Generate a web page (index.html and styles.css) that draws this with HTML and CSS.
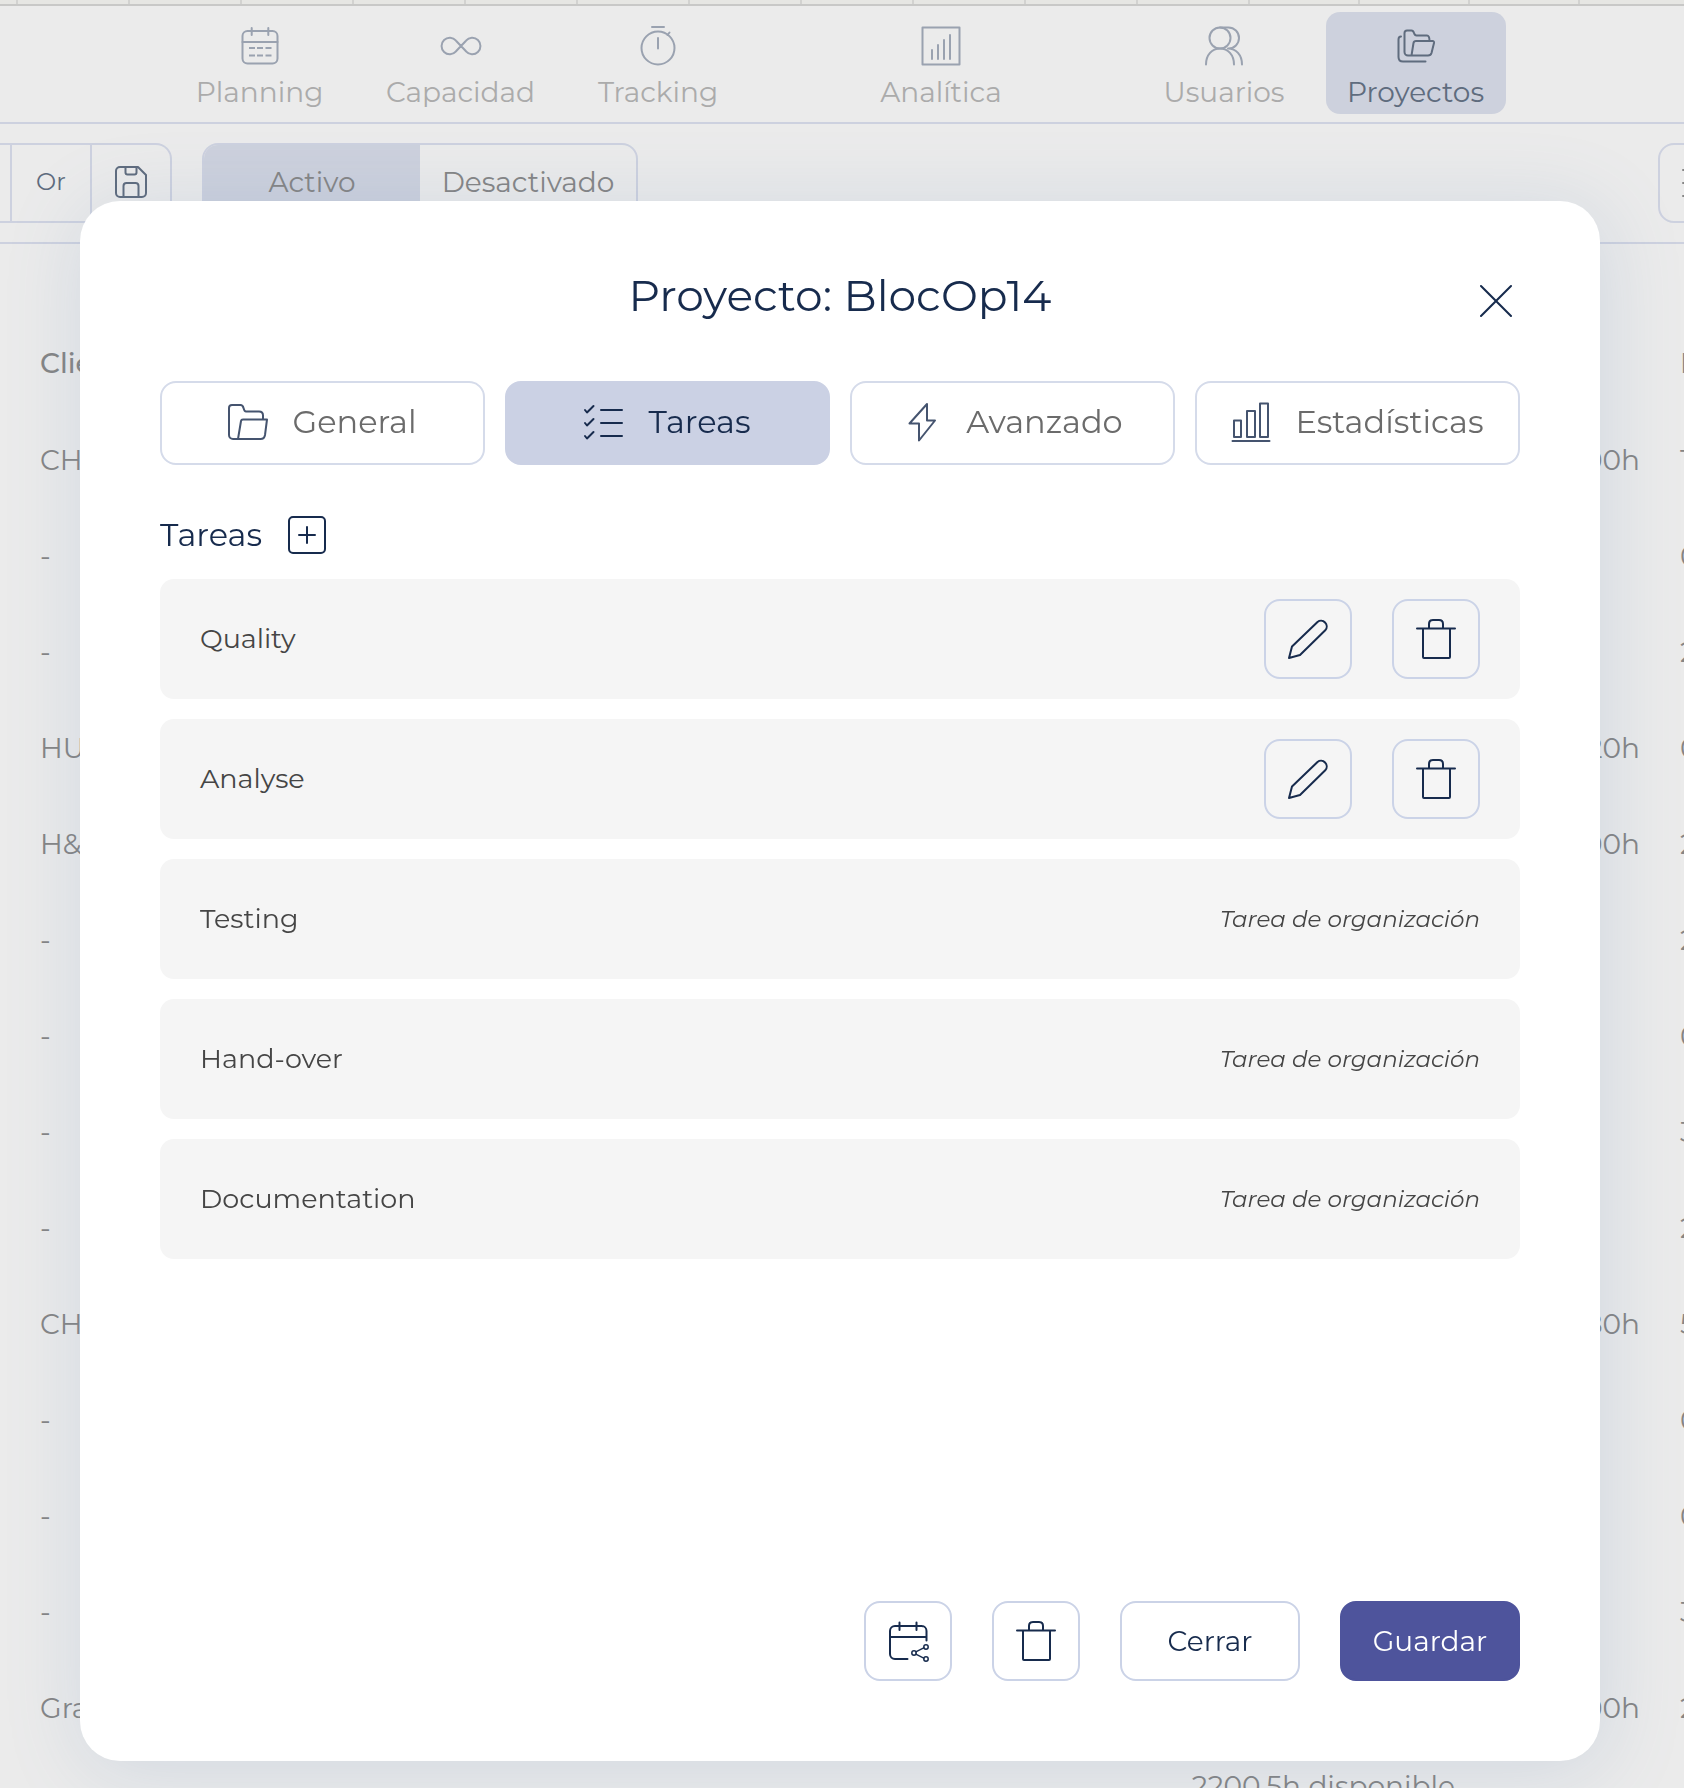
FILE: index.html
```html
<!DOCTYPE html>
<html lang="es">
  <head>
    <meta charset="UTF-8">
    <title>Proyecto: BlocOp14</title>
    <link rel="stylesheet" href="styles.css">
  </head>
  <body>
    <svg class="sprite" aria-hidden="true">
      <symbol id="icon-pencil" viewBox="0 0 40 40">
        <path d="M1 39l3-11.500L29.500 3a5.700 5.700 0 0 1 8 8L12 36z"/>
      </symbol>
      <symbol id="icon-trash" viewBox="0 0 40 40">
        <path d="M1 9.500h38M7 9.500V38a1 1 0 0 0 1 1h25a1 1 0 0 0 1-1V9.500M13 9.500V5c0-2.500 1-4 4-4h6c3 0 4 1.500 4 4v4.500"/>
      </symbol>
    </svg>

    <div class="page">
      <div class="ruler">
        <span></span><span></span><span></span><span></span><span></span>
        <span></span><span></span><span></span><span></span><span></span>
        <span></span><span></span><span></span><span></span><span></span>
      </div>

      <nav class="main-nav">
        <a href="#" class="nav-item nav-planning">
          <svg class="icon" viewBox="0 0 40 40"><rect x="2.500" y="5" width="35" height="32.500" rx="5"/><path d="M2.500 16h35M11.700 2v7M28.300 2v7"/><path class="dashes" d="M9 22h6M17 22h6M25.500 22h6M9 29.500h6M17 29.500h6M25.500 29.500h6"/></svg>
          Planning
        </a>
        <a href="#" class="nav-item nav-capacidad">
          <svg class="icon" viewBox="0 0 40 40"><path d="M20 20l-5-5.300A8.200 8.200 0 1 0 15 25.300L25 14.700A8.200 8.200 0 1 1 25 25.300z"/></svg>
          Capacidad
        </a>
        <a href="#" class="nav-item nav-short">
          <svg class="icon" viewBox="0 0 40 40"><circle cx="20" cy="22" r="16.500"/><path d="M14 1h12M20 12v10.500M29.500 9l2-2.500"/></svg>
          Tracking
        </a>
        <a href="#" class="nav-item nav-short nav-group">
          <svg class="icon" viewBox="0 0 40 40"><rect x="1.500" y="1.500" width="37" height="37"/><path d="M11 24v9M17 19v14M23 14v19M29 9v24"/></svg>
          Analítica
        </a>
        <a href="#" class="nav-item nav-short nav-group">
          <svg class="icon" viewBox="0 0 40 40"><circle cx="16" cy="12" r="10.500"/><path d="M2 38.500c0-9.500 6-16 14-16s14 6.500 14 16M16 1.500h8.500a10.500 10.500 0 0 1 0 21H24c8 0 14 6.500 14 16"/></svg>
          Usuarios
        </a>
        <a href="#" class="nav-item nav-proyectos active">
          <svg class="icon" viewBox="0 0 40 40"><path d="M5 10.500c-1.700 0-2.500 1-2.500 3V31c0 3 1.500 4.500 4.500 4.500h22.500M15.500 29.500H12A3.500 3.500 0 0 1 8.500 26V7A2.500 2.500 0 0 1 11 4.500h4.500c1.500 0 2 1 2.500 2.500s1 2.500 2.500 2.500H31c2 0 2.500 1.500 2.500 5.500M15.500 29.500l2-12.500c.3-1.500 1-2 2.500-2h16.500c1.200 0 1.700.8 1.500 2l-2.500 10c-.5 1.800-1.500 2.500-3.500 2.500z"/></svg>
          Proyectos
        </a>
      </nav>

      <div class="toolbar">
        <div class="filter-group">
          <button class="filter-edge" aria-label="And"></button>
          <button>Or</button>
          <button aria-label="Guardar filtro">
            <svg class="icon icon-save" viewBox="0 0 32 32"><path d="M5 1h18l8 8v18a4 4 0 0 1-4 4H5a4 4 0 0 1-4-4V5a4 4 0 0 1 4-4zM10.500 1v5.500a2 2 0 0 0 2 2h7a2 2 0 0 0 2-2V1M8.500 31V20a3 3 0 0 1 3-3h9a3 3 0 0 1 3 3v11"/></svg>
          </button>
        </div>
        <div class="state-group">
          <button class="active">Activo</button>
          <button>Desactivado</button>
        </div>
        <button class="view-button" aria-label="Lista">
          <svg class="icon" viewBox="0 0 40 40"><path d="M1 7h3M1 20h3M1 33h3M10 7h29M10 20h29M10 33h29"/></svg>
        </button>
      </div>

      <table class="projects">
        <thead>
          <tr><th>Cliente</th><th class="hours"></th><th class="total">Horas</th></tr>
        </thead>
        <tbody>
          <tr><td>CH</td><td class="hours">100h</td><td class="total">100h</td></tr>
          <tr><td>-</td><td class="hours"></td><td class="total">0h</td></tr>
          <tr><td>-</td><td class="hours"></td><td class="total">20h</td></tr>
          <tr><td>HU</td><td class="hours">20h</td><td class="total">0h</td></tr>
          <tr><td>H&amp;</td><td class="hours">100h</td><td class="total">20h</td></tr>
          <tr><td>-</td><td class="hours"></td><td class="total">20h</td></tr>
          <tr><td>-</td><td class="hours"></td><td class="total">0h</td></tr>
          <tr><td>-</td><td class="hours"></td><td class="total">30h</td></tr>
          <tr><td>-</td><td class="hours"></td><td class="total">20h</td></tr>
          <tr><td>CH</td><td class="hours">80h</td><td class="total">50h</td></tr>
          <tr><td>-</td><td class="hours"></td><td class="total">0h</td></tr>
          <tr><td>-</td><td class="hours"></td><td class="total">0h</td></tr>
          <tr><td>-</td><td class="hours"></td><td class="total">30h</td></tr>
          <tr><td>Gra</td><td class="hours">100h</td><td class="total">20h</td></tr>
        </tbody>
      </table>
      <p class="available">2200.5h disponible</p>
    </div>

    <div class="overlay">
      <div class="modal" role="dialog" aria-labelledby="modal-title">
        <header class="modal-header">
          <h1 id="modal-title">Proyecto: BlocOp14</h1>
          <button class="close" aria-label="Cerrar ventana">
            <svg class="icon icon-close" viewBox="0 0 32 32"><path d="M1 1l30 30M31 1L1 31"/></svg>
          </button>
        </header>

        <div class="tabs">
          <button>
            <svg class="icon" viewBox="0 0 40 40"><path d="M10 37H5a4 4 0 0 1-4-4V6a3 3 0 0 1 3-3h8.500c1.500 0 2.500 1 3 3s1 3.500 2.500 3.500h13c3 0 4 1.500 4 4V17M10 37l3-18c.2-1 .8-1.500 2-1.500h24L37 33c-.5 3-1.500 4-4.500 4z"/></svg>
            General
          </button>
          <button class="active">
            <svg class="icon" viewBox="0 0 40 40"><path d="M1 8l2 2.500 6.500-6.500M1 21l2 2.500L9.500 17M1 34l2 2.500L9.500 30M17 8h21M17 21h21M17 34h21"/></svg>
            Tareas
          </button>
          <button>
            <svg class="icon" viewBox="0 0 40 40"><path d="M25 2v16.500h8L17 38.500v-17H7.500z"/></svg>
            Avanzado
          </button>
          <button>
            <svg class="icon" viewBox="0 0 40 40"><path d="M3 18.500h7V35H3zM16 9h8v26h-8zM29 1.500h8V35h-8zM1.500 39h37"/></svg>
            Estadísticas
          </button>
        </div>

        <div class="section-title">
          <h2>Tareas</h2>
          <button class="add" aria-label="Añadir tarea">
            <svg class="icon icon-plus" viewBox="0 0 18 18"><path d="M9 1v16M1 9h16"/></svg>
          </button>
        </div>

        <ul class="tasks">
          <li>
            Quality
            <div class="actions">
              <button class="icon-button" aria-label="Editar"><svg class="icon"><use href="#icon-pencil"/></svg></button>
              <button class="icon-button" aria-label="Eliminar"><svg class="icon"><use href="#icon-trash"/></svg></button>
            </div>
          </li>
          <li>
            Analyse
            <div class="actions">
              <button class="icon-button" aria-label="Editar"><svg class="icon"><use href="#icon-pencil"/></svg></button>
              <button class="icon-button" aria-label="Eliminar"><svg class="icon"><use href="#icon-trash"/></svg></button>
            </div>
          </li>
          <li>Testing <em>Tarea de organización</em></li>
          <li>Hand-over <em>Tarea de organización</em></li>
          <li>Documentation <em>Tarea de organización</em></li>
        </ul>

        <footer class="modal-footer">
          <button class="icon-button" aria-label="Compartir calendario">
            <svg class="icon" viewBox="0 0 40 40"><path d="M19.500 38H7a5 5 0 0 1-5-5V10a5 5 0 0 1 5-5h26.500a5 5 0 0 1 5 5v9.500M2 16h36.500M11.500 1.500V9M28.500 1.500V9"/><g class="share"><path d="M27.800 30.800l8-4M27.800 33.200l8 4"/><circle cx="26" cy="32" r="2.200"/><circle cx="38" cy="26" r="2.200"/><circle cx="38" cy="38" r="2.200"/></g></svg>
          </button>
          <button class="icon-button" aria-label="Eliminar"><svg class="icon"><use href="#icon-trash"/></svg></button>
          <button class="button">Cerrar</button>
          <button class="button primary">Guardar</button>
        </footer>
      </div>
    </div>
  </body>
</html>
```

FILE: styles.css
```css
* {
  box-sizing: border-box;
}

body {
  margin: 0;
  overflow: hidden;
  background: #ebebeb;
  color: #858585;
  font-family: 'Montserrat', 'Inter', sans-serif;
  font-size: 28px;
  font-weight: 400;
  line-height: 36px;
}

button {
  display: flex;
  align-items: center;
  justify-content: center;
  padding: 0;
  border: 0;
  background: none;
  color: inherit;
  font: inherit;
  cursor: pointer;
}

h1, h2, p, ul {
  margin: 0;
  padding: 0;
  font-weight: 400;
}

.sprite {
  display: none;
}

.icon {
  display: block;
  flex: none;
  width: 40px;
  height: 40px;
  overflow: visible;
  fill: none;
  stroke: currentColor;
  stroke-width: 2;
  stroke-linecap: round;
  stroke-linejoin: round;
}

.dashes {
  stroke-linecap: butt;
}

.share {
  stroke-width: 1.5;
}

/* Page behind the dialog */

.page {
  height: 100vh;
  overflow: hidden;
}

.ruler {
  display: flex;
  height: 6px;
  background: #e6e6e3;
  border-bottom: 2px solid #c8c8c7;
}

.ruler span {
  flex: 0 0 112px;
  border-right: 2px solid #d2d2d0;
}

.ruler span:first-child {
  flex-basis: 18px;
}

.ruler span:nth-child(n + 13) {
  flex-basis: 110px;
}

.main-nav {
  display: flex;
  justify-content: center;
  gap: 20px;
  height: 118px;
  padding: 6px 4px 0 0;
  border-bottom: 2px solid #cdd1df;
}

.nav-item {
  display: flex;
  flex-direction: column;
  align-items: center;
  gap: 8px;
  height: 102px;
  padding-top: 14px;
  border-radius: 14px;
  color: #ababab;
  text-decoration: none;
}

.nav-item .icon {
  color: #9aa2b0;
}

.nav-planning {
  width: 170px;
}

.nav-capacidad {
  width: 192px;
}

.nav-short {
  width: 163px;
}

.nav-proyectos {
  width: 180px;
}

.nav-group {
  margin-left: 100px;
}

.nav-item.active,
.nav-item.active .icon {
  color: #5f6c7e;
}

.nav-item.active {
  background: #cdd1dd;
}

.toolbar {
  display: flex;
  gap: 30px;
  height: 120px;
  padding-top: 19px;
  border-bottom: 2px solid #cdd1df;
}

.filter-group,
.state-group,
.view-button {
  display: flex;
  height: 80px;
  border: 2px solid #cdd1df;
  border-radius: 16px;
  overflow: hidden;
}

.filter-group button,
.state-group button {
  padding-bottom: 2px;
}

.filter-group {
  width: 172px;
  border-left: 0;
  border-radius: 0 16px 16px 0;
  color: #5f6c7e;
  font-size: 24px;
}

.filter-group button {
  flex: 1;
}

.filter-group button + button {
  border-left: 2px solid #cdd1df;
}

.filter-group .filter-edge {
  flex: 0 0 10px;
}

.icon-save {
  width: 32px;
  height: 32px;
}

.state-group {
  width: 436px;
}

.state-group button {
  flex: 1 1 0;
  min-width: 0;
}

.state-group .active {
  background: #cdd1dd;
}

.view-button {
  flex: 0 0 88px;
  margin-left: auto;
  margin-right: -62px;
}

.projects {
  width: calc(100% + 80px);
  margin-top: 70px;
  border-collapse: collapse;
  table-layout: fixed;
}

.projects th,
.projects td {
  height: 96px;
  padding: 0 0 0 40px;
  text-align: left;
}

.projects th {
  height: 98px;
  font-weight: 500;
}

.projects .hours {
  width: 240px;
  padding-right: 40px;
  text-align: right;
}

.projects .total {
  width: 84px;
  padding-left: 0;
}

.available {
  padding: 12px 229px 0 0;
  text-align: right;
}

/* Dialog */

.overlay {
  position: fixed;
  inset: 0;
  display: flex;
  padding: 201px 84px 27px 80px;
}

.modal {
  display: flex;
  flex: 1;
  flex-direction: column;
  padding: 66px 80px 80px;
  border-radius: 40px;
  background: #fff;
  box-shadow: 4px 8px 80px rgba(90, 125, 180, 0.18);
  color: #172b4d;
}

.modal-header {
  display: grid;
  grid-template-columns: 48px 1fr 48px;
  align-items: start;
}

.modal-header h1 {
  grid-column: 2;
  font-size: 44px;
  line-height: 56px;
  text-align: center;
}

.close {
  height: 68px;
}

.icon-close {
  width: 32px;
  height: 32px;
}

.tabs {
  display: grid;
  grid-template-columns: repeat(4, 1fr);
  gap: 20px;
  margin-top: 46px;
}

.tabs button {
  gap: 24px;
  height: 84px;
  padding-bottom: 2px;
  border: 2px solid #d5dbea;
  border-radius: 16px;
  color: #6b6b6b;
  font-size: 32px;
}

.tabs .icon {
  color: #45546f;
}

.tabs .active,
.tabs .active .icon {
  color: #172b4d;
}

.tabs .active {
  border-color: #cbd1e4;
  background: #cbd1e4;
}

.section-title {
  display: flex;
  align-items: center;
  gap: 26px;
  margin: 50px 0 24px;
}

.section-title h2 {
  font-size: 32px;
  line-height: 40px;
}

.add {
  width: 38px;
  height: 38px;
  border: 2px solid #172b4d;
  border-radius: 5px;
}

.icon-plus {
  width: 18px;
  height: 18px;
}

.tasks {
  display: grid;
  gap: 20px;
  list-style: none;
}

.tasks li {
  display: flex;
  align-items: center;
  justify-content: space-between;
  height: 120px;
  padding: 0 40px;
  border-radius: 14px;
  background: #f5f5f5;
  color: #454545;
  font-size: 27px;
}

.tasks em {
  font-size: 23px;
}

.actions,
.modal-footer {
  display: flex;
  gap: 40px;
  color: #172b4d;
}

.icon-button,
.button {
  width: 88px;
  height: 80px;
  border: 2px solid #cbd3e7;
  border-radius: 16px;
}

.modal-footer {
  justify-content: flex-end;
  margin-top: auto;
}

.button {
  width: 180px;
}

.button.primary {
  border-color: #4e549c;
  background: #4e549c;
  color: #fff;
}
```
